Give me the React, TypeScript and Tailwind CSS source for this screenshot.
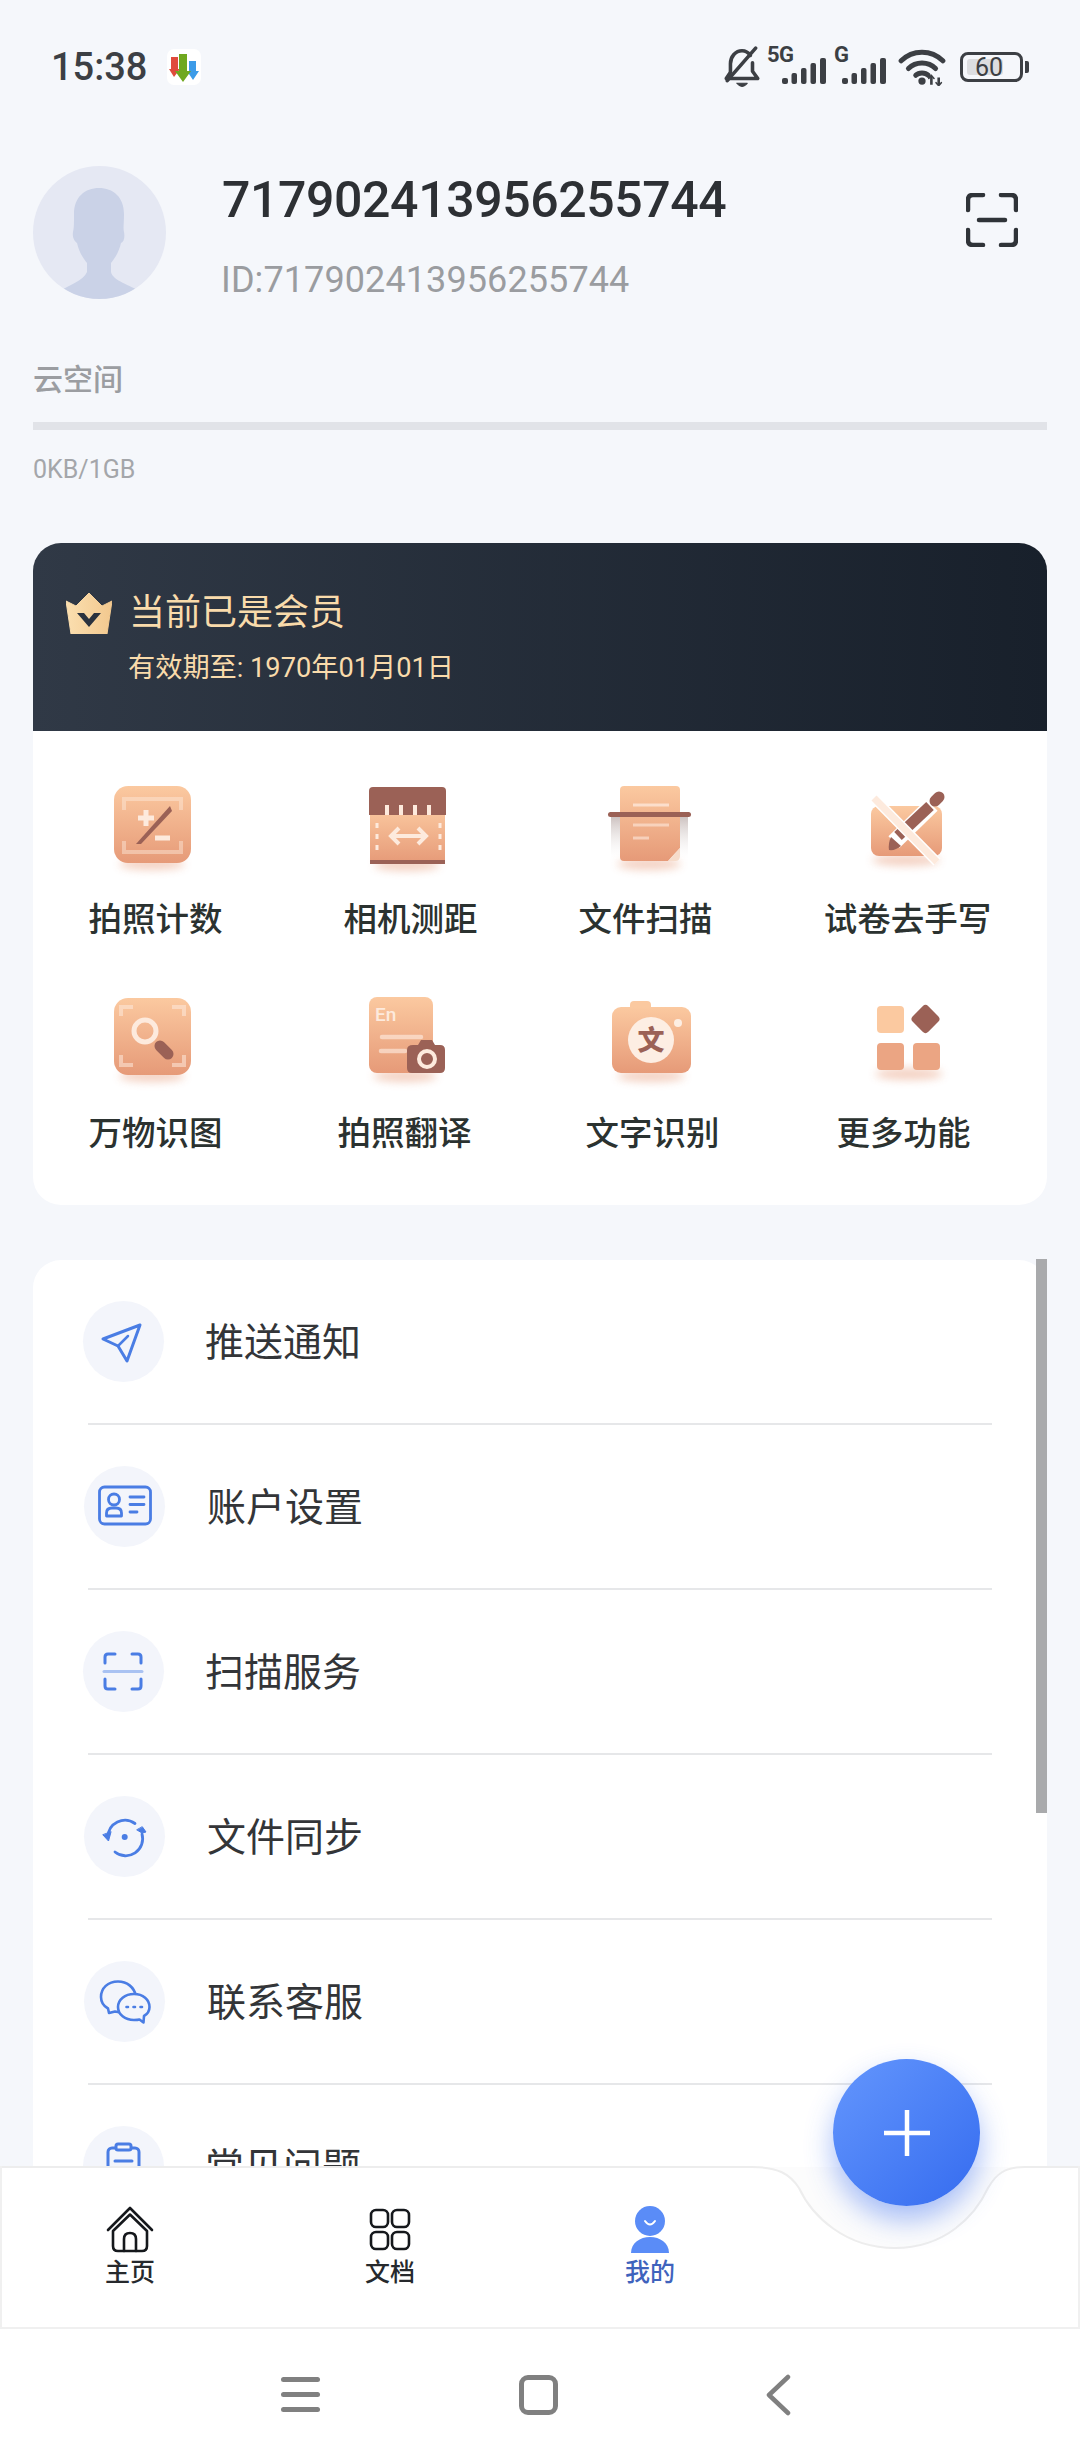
import React from 'react';

const BLUE = '#4a7de4';

// peach feature icons share this frame: 100x100 with gradient + soft floor shadow
const PeachFrame: React.FC<{ shadow: [number, number, number]; className?: string; children: React.ReactNode }> = ({ shadow, className, children }) => (
  <svg width="100" height="100" viewBox="0 0 100 100" className={className}>
    <defs>
      <linearGradient id="peach" x1="0" y1="0" x2="0" y2="1">
        <stop offset="0" stopColor="#fbc9a0" />
        <stop offset="1" stopColor="#e69a78" />
      </linearGradient>
      <filter id="soft" x="-30%" y="-100%" width="160%" height="300%">
        <feGaussianBlur stdDeviation="4" />
      </filter>
    </defs>
    <ellipse cx={shadow[0]} cy={shadow[1]} rx={shadow[2]} ry="6" fill="#e69a78" opacity="0.45" filter="url(#soft)" />
    {children}
  </svg>
);

const LIGHT = '#fdeadd';
const BROWN = '#9b6156';

const CounterIcon = () => (
  <PeachFrame shadow={[46, 84, 33]}>
    <g transform="translate(8,6)">
      <rect width="77" height="77" rx="14" fill="url(#peach)" />
      <path d="M10 24V13H67V24M10 55V66H67V55" fill="none" stroke={LIGHT} strokeOpacity="0.45" strokeWidth="4" />
      <path d="M24 32H40M32 24V40" stroke={LIGHT} strokeWidth="5" />
      <path d="M41 52H56" stroke={LIGHT} strokeWidth="5" />
      <path d="M56 20L58 25L27 58L22 58Z" fill={BROWN} />
    </g>
  </PeachFrame>
);

const RulerIcon = () => (
  <PeachFrame shadow={[46, 85, 33]}>
    <g transform="translate(8,7)">
      <rect x="1" y="20" width="75" height="56" fill="url(#peach)" />
      <path d="M4 0H73Q77 0 77 4V28H0V4Q0 0 4 0Z" fill={BROWN} />
      <path d="M18 18V28M32 18V28M46 18V28M60 18V28" stroke={LIGHT} strokeWidth="4" />
      <rect x="1" y="73" width="75" height="4" fill={BROWN} />
      <path d="M8 36V66M71 36V66" stroke={LIGHT} strokeWidth="3" strokeDasharray="5 6" />
      <path d="M22 49H57M30 41L22 49L30 57M49 41L57 49L49 57" fill="none" stroke={LIGHT} strokeWidth="4" />
    </g>
  </PeachFrame>
);

const ScanDocIcon = () => (
  <PeachFrame shadow={[53, 84, 32]}>
    <defs>
      <linearGradient id="fade" x1="0" y1="0" x2="0" y2="1">
        <stop offset="0" stopColor="#c9bdbb" />
        <stop offset="1" stopColor="#ffffff" stopOpacity="0.2" />
      </linearGradient>
    </defs>
    <g transform="translate(12,6)">
      <rect x="3" y="29" width="77" height="44" fill="url(#fade)" />
      <path d="M16 0H68Q72 0 72 4V62L60 75H16Q12 75 12 71V4Q12 0 16 0Z" fill="url(#peach)" />
      <path d="M60 75L72 62V70Q72 75 67 75Z" fill="#f6dccb" />
      <rect x="0" y="26" width="83" height="5" rx="2.5" fill={BROWN} />
      <path d="M25 19H61" stroke={LIGHT} strokeOpacity="0.75" strokeWidth="3" />
      <path d="M25 39H61M25 52H41" stroke={LIGHT} strokeOpacity="0.6" strokeWidth="3" />
    </g>
  </PeachFrame>
);

const NoPenIcon = () => (
  <PeachFrame shadow={[48, 80, 34]}>
    <rect x="13" y="26" width="71" height="50" rx="8" fill="url(#peach)" />
    <path d="M36 62L74 25" stroke="#ffffff" strokeWidth="16" />
    <path d="M40 56L72 26" stroke={BROWN} strokeWidth="11" />
    <path d="M77 21L81 17" stroke={BROWN} strokeWidth="11" strokeLinecap="round" />
    <path d="M33 57L43 66Q37 71 31 70Q30 63 33 57Z" fill={BROWN} />
    <path d="M16 18L79 82" stroke="#ffffff" strokeWidth="10" />
    <path d="M16 18L79 82" stroke={LIGHT} strokeWidth="7" />
  </PeachFrame>
);

const LensIcon = () => (
  <PeachFrame shadow={[46, 84, 33]}>
    <g transform="translate(8,6)">
      <rect width="77" height="77" rx="14" fill="url(#peach)" />
      <path d="M7 18V9H19M58 9H70V18M7 57V67H19M58 67H70V57" fill="none" stroke={LIGHT} strokeOpacity="0.55" strokeWidth="4" />
      <circle cx="31" cy="33" r="11" fill="none" stroke={LIGHT} strokeWidth="5" />
      <path d="M46 48L54 56" stroke={BROWN} strokeWidth="11" strokeLinecap="round" />
    </g>
  </PeachFrame>
);

const TranslateIcon = () => (
  <PeachFrame shadow={[50, 84, 32]}>
    <rect x="14" y="5" width="64" height="76" rx="8" fill="url(#peach)" />
    <text x="20" y="29" fontSize="19" fontWeight="500" fill={LIGHT} fontFamily="Roboto, sans-serif">En</text>
    <path d="M27 45H66M26 59H50" stroke={LIGHT} strokeOpacity="0.65" strokeWidth="4.5" strokeLinecap="round" />
    <path d="M58 53H63L66 48H77L80 53H85Q90 53 90 58V76Q90 81 85 81H57Q52 81 52 76V58Q52 53 58 53Z" fill={BROWN} />
    <circle cx="72" cy="67" r="8" fill="none" stroke={LIGHT} strokeWidth="4" />
  </PeachFrame>
);

const OcrIcon = () => (
  <PeachFrame shadow={[48, 84, 34]}>
    <rect x="27" y="9" width="21" height="14" rx="4" fill="#fbc9a0" />
    <rect x="9" y="15" width="79" height="66" rx="9" fill="url(#peach)" />
    <circle cx="48" cy="48" r="23" fill="#fdeee3" />
    <circle cx="75" cy="31" r="4" fill="#fdeee3" />
    <text x="48" y="58" textAnchor="middle" fontSize="27" fontWeight="900" fill={BROWN} fontFamily="'Noto Sans CJK SC', sans-serif">文</text>
  </PeachFrame>
);

const MoreIcon = () => (
  <PeachFrame shadow={[55, 82, 34]}>
    <rect x="23" y="14" width="27" height="27" rx="4" fill="#fbc9a0" />
    <rect x="23" y="51" width="27" height="27" rx="4" fill="#eba583" />
    <rect x="59" y="51" width="27" height="27" rx="4" fill="#eba583" />
    <rect x="60.5" y="16" width="22" height="22" rx="4" fill={BROWN} transform="rotate(45 71.5 27)" />
  </PeachFrame>
);

// rows aren't evenly spaced in the source, so each item carries its own left margin
const rowOne = [
  { label: '拍照计数', icon: <CounterIcon />, ml: 'ml-[56px]', w: 'w-[133px]' },
  { label: '相机测距', icon: <RulerIcon />, ml: 'ml-[122px]', w: 'w-[133px]' },
  { label: '文件扫描', icon: <ScanDocIcon />, ml: 'ml-[102px]', w: 'w-[133px]' },
  { label: '试卷去手写', icon: <NoPenIcon />, ml: 'ml-[113px]', w: 'w-[165px]' },
];
const rowTwo = [
  { label: '万物识图', icon: <LensIcon />, ml: 'ml-[56px]', w: 'w-[133px]' },
  { label: '拍照翻译', icon: <TranslateIcon />, ml: 'ml-[116px]', w: 'w-[133px]' },
  { label: '文字识别', icon: <OcrIcon />, ml: 'ml-[115px]', w: 'w-[133px]' },
  { label: '更多功能', icon: <MoreIcon />, ml: 'ml-[118px]', w: 'w-[133px]' },
];

const Feature: React.FC<{ label: string; icon: React.ReactNode; ml: string; w: string; labelTop?: string }> = ({ label, icon, ml, w, labelTop = 'mt-[20px]' }) => (
  <div className={`flex flex-col items-center ${ml} ${w}`}>
    {icon}
    <span className={`${labelTop} text-[33.5px] leading-[40px] font-medium text-[#2b3230] whitespace-nowrap`}>{label}</span>
  </div>
);

const SendGlyph = () => (
  <svg width="81" height="81" viewBox="0 0 81 81" fill="none" stroke={BLUE} strokeWidth="3" strokeLinejoin="round" strokeLinecap="round">
    <path d="M57 24L20 38L35 45L44 60Z" />
    <path d="M35 45L45 35" strokeWidth="2.5" />
  </svg>
);
const CardGlyph = () => (
  <svg width="81" height="81" viewBox="0 0 81 81" fill="none" stroke={BLUE} strokeWidth="2.8" strokeLinecap="round">
    <rect x="15.5" y="21" width="51" height="37" rx="5" />
    <circle cx="30" cy="33.5" r="5.5" />
    <path d="M22.5 50V47Q22.5 42 28 42H32Q37.5 42 37.5 47V50Z" strokeLinejoin="round" />
    <path d="M46 31H60M46 38.5H60M46 46H53" />
  </svg>
);
const ScanGlyph = () => (
  <svg width="81" height="81" viewBox="0 0 81 81" fill="none" stroke={BLUE} strokeWidth="3" strokeLinecap="round" strokeLinejoin="round">
    <path d="M22 32V26Q22 23 25 23H32M49 23H55Q58 23 58 26V32M22 48V55Q22 58 25 58H32M49 58H55Q58 58 58 55V48" />
    <path d="M21 40.5H59" stroke="#a9c2f2" />
  </svg>
);
const SyncGlyph = () => (
  <svg width="81" height="81" viewBox="0 0 81 81" fill="none" stroke={BLUE} strokeWidth="2.8" strokeLinecap="round">
    <path d="M24 41A17 17 0 0 1 51 27.5" />
    <path d="M58 38A17 17 0 0 1 31 56" />
    <path d="M19 39L24.5 45L27 36Z" fill={BLUE} strokeWidth="1" strokeLinejoin="round" />
    <path d="M53 34L58 37L62 36L58.5 31Z" fill={BLUE} strokeWidth="1" strokeLinejoin="round" />
    <circle cx="40.7" cy="41" r="3" fill={BLUE} stroke="none" />
  </svg>
);
const ChatGlyph = () => (
  <svg width="81" height="81" viewBox="0 0 81 81" fill="none" stroke={BLUE} strokeWidth="2.6" strokeLinejoin="round">
    <path d="M34 20.5C24 20.5 17 27 17 36C17 41 19.5 45 24 47.5L25 52L31 50.5C33 51 36 51.5 38 51C45 49 52 42 52 35C50 26 43 20.5 34 20.5Z" />
    <path d="M50 33C41 33 34 38.5 34 46C34 53.5 41 59 50 59C52 59 54 59 55.5 58.5L59.5 61.5L60 55C63.5 53 65.5 50 65.5 46C65.5 38.5 59 33 50 33Z" fill="#f3f5fb" />
    <path d="M42.5 46H44M49.5 46H51M56.5 46H58" strokeLinecap="round" />
  </svg>
);
const ClipGlyph = () => (
  <svg width="81" height="81" viewBox="0 0 81 81" fill="none" stroke={BLUE} strokeWidth="3" strokeLinecap="round" strokeLinejoin="round">
    <rect x="25" y="22" width="31" height="38" rx="4" />
    <rect x="33" y="18" width="15" height="6" rx="2" fill="#f3f5fb" />
    <path d="M32 35H49M32 43H49" />
  </svg>
);

const menu = [
  { label: '推送通知', icon: <SendGlyph />, pl: 'pl-[50px]', ml: 'ml-[41px]' },
  { label: '账户设置', icon: <CardGlyph />, pl: 'pl-[51px]', ml: 'ml-[42px]' },
  { label: '扫描服务', icon: <ScanGlyph />, pl: 'pl-[50px]', ml: 'ml-[41px]' },
  { label: '文件同步', icon: <SyncGlyph />, pl: 'pl-[51px]', ml: 'ml-[42px]' },
  { label: '联系客服', icon: <ChatGlyph />, pl: 'pl-[51px]', ml: 'ml-[42px]' },
  { label: '常见问题', icon: <ClipGlyph />, pl: 'pl-[50px]', ml: 'ml-[41px]' },
];

const Signal = () => (
  <svg width="44" height="28" viewBox="0 0 44 28" fill="#3c3f44">
    <rect x="0" y="21" width="6" height="6" rx="2" />
    <rect x="9.5" y="16" width="5.500" height="11" rx="2" />
    <rect x="19" y="11" width="5.500" height="16" rx="2" />
    <rect x="28.5" y="6" width="5.500" height="21" rx="2" />
    <rect x="38" y="1" width="6" height="26" rx="2" />
  </svg>
);

const StatusIcons = () => (
  <div className="ml-auto mr-[51px] flex items-center text-[#3c3f44]">
    <svg width="38" height="42" viewBox="0 0 36 40" fill="none" stroke="#3c3f44" strokeWidth="3.4" strokeLinecap="round" strokeLinejoin="round">
      <path d="M7 24V17C7 10 12 4.500 18 4.500C21 4.500 24 6 26 9" />
      <path d="M28 16V24L33 31H3L7 25" />
      <path d="M31 2L4 33" />
      <path d="M13 35.500H23Q20 38.500 18 38.500Q15.500 38.500 13 35.500Z" fill="#3c3f44" strokeWidth="1" />
    </svg>
    <div className="relative ml-[6px] w-[59px] h-[34px]">
      <span className="absolute left-0 top-[-6px] text-[22px] leading-[22px] font-bold tracking-[-0.5px]">5G</span>
      <div className="absolute right-0 top-[7px]"><Signal /></div>
    </div>
    <div className="relative ml-[1px] w-[59px] h-[34px]">
      <span className="absolute left-[7px] top-[-6px] text-[22px] leading-[22px] font-bold">G</span>
      <div className="absolute right-0 top-[7px]"><Signal /></div>
    </div>
    <svg width="48" height="38" viewBox="0 0 46 36" fill="none" stroke="#3c3f44" strokeWidth="4.800" strokeLinecap="round" className="ml-[12px]">
      <path d="M3 12C14 1 32 1 43 12" />
      <path d="M10 19.500C17 12.500 29 12.500 36 19.500" />
      <path d="M17 26C20 23 26 23 29 26" />
      <circle cx="23" cy="31.500" r="3.500" fill="#3c3f44" stroke="none" />
      <path d="M32 35V27M39 28V35" strokeWidth="2.500" strokeLinecap="butt" />
      <path d="M29.500 29L32 26L34.500 29M36.500 33L39 36L41.500 33" strokeWidth="1.500" />
    </svg>
    <div className="relative ml-[14px] w-[63px] h-[30px] rounded-[8px] border-[3px] border-[#3c3f44]">
      <div className="absolute left-[4px] top-[4px] bottom-[4px] w-[36px] rounded-[3px] bg-[#dcdde0]" />
      <span className="absolute inset-0 flex items-center justify-center text-[25px] leading-none pr-[5px] font-normal">60</span>
    </div>
    <div className="ml-[2px] w-[4px] h-[12px] rounded-r-[2px] bg-[#3c3f44]" />
  </div>
);

const AppBadge = () => (
  <svg width="34" height="36" viewBox="0 0 34 36" className="ml-[20px]">
    <rect width="34" height="36" rx="7" fill="#ffffff" />
    <path d="M4 8H11V20H13L7 28L2 20H4Z" fill="#e04a3c" />
    <path d="M22 12H29V22H32L26 31L20 22H22Z" fill="#3c9be8" />
    <path d="M12 5H20V22H24L16 33L8 22H12Z" fill="#6fa81f" />
  </svg>
);

const TopScan = () => (
  <svg width="52" height="54" viewBox="0 0 52 54" fill="none" stroke="#2f3338" strokeWidth="4.5" strokeLinecap="round" strokeLinejoin="round" className="mt-[27px] ml-auto mr-[62px]">
    <path d="M2 17V7Q2 2 7 2H17M35 2H45Q50 2 50 7V17M2 37V47Q2 52 7 52H17M35 52H45Q50 52 50 47V37" />
    <path d="M13 27H39" />
  </svg>
);

const Avatar = () => (
  <svg width="133" height="133" viewBox="0 0 133 133">
    <circle cx="66.500" cy="66.500" r="66.500" fill="#e5e8f3" />
    <clipPath id="av"><circle cx="66.500" cy="66.500" r="66.500" /></clipPath>
    <path
      clipPath="url(#av)"
      d="M66 22C52 22 41 31 41 48C41 58 41 62 40 66C39 72 42 76 44 77C46 86 50 92 54 97V106C50 115 36 119 25 126L25 140H108V126C97 119 80 115 78 106V97C82 92 86 86 88 77C91 76 92 71 91 66C90 62 91 58 91 48C91 31 80 22 66 22Z"
      fill="#cad2e7"
    />
  </svg>
);

const Crown = () => (
  <svg width="46" height="41" viewBox="0 0 46 41">
    <defs>
      <linearGradient id="gold" x1="0" y1="0" x2="1" y2="0">
        <stop offset="0" stopColor="#fbdfb0" />
        <stop offset="1" stopColor="#f2c88e" />
      </linearGradient>
    </defs>
    <path d="M0 8L10 13L23 0L36 13L46 8L41 41H5Z" fill="url(#gold)" stroke="url(#gold)" strokeWidth="1" strokeLinejoin="round" />
    <path d="M11 20H18L23 26L28 20H35L23 34Z" fill="#2a323e" />
  </svg>
);

const BottomNav = () => (
  <div className="absolute left-0 right-0 bottom-0 h-[294px] bg-white">
    <svg width="1080" height="90" viewBox="0 0 1080 90" className="absolute left-0 top-0">
      <path
        d="M0 1H752C778 1 790 8 799 22C812 50 845 82 895 82C945 82 975 50 988 22C996 8 1005 1 1025 1H1080"
        fill="#fcfcfc"
        stroke="#ededed"
        strokeWidth="2"
      />
    </svg>
    <div className="relative h-[163px] border-b-2 border-x-2 border-[#f0f0f0] flex pt-[40px]">
      <div className="w-[260px] flex flex-col items-center ml-[-2px]">
        <svg width="48" height="47" viewBox="0 0 48 47" fill="none" stroke="#15181c" strokeWidth="2.600" strokeLinecap="round" strokeLinejoin="round">
          <path d="M2 24L24 2L46 24" />
          <path d="M7 25L24 8.500L41 25V40Q41 45 36 45H12Q7 45 7 40Z" />
          <path d="M18 45V33Q18 27 24 27Q30 27 30 33V45" />
        </svg>
        <span className="mt-[5px] text-[25px] leading-[30px] font-medium text-[#26292d]">主页</span>
      </div>
      <div className="w-[260px] flex flex-col items-center">
        <svg width="48" height="47" viewBox="0 0 48 47" fill="none" stroke="#15181c" strokeWidth="2.600">
          <rect x="5" y="4" width="17" height="17" rx="5" />
          <rect x="26" y="4" width="17" height="17" rx="5" />
          <rect x="5" y="26" width="17" height="17" rx="5" />
          <rect x="26" y="26" width="17" height="17" rx="5" />
        </svg>
        <span className="mt-[5px] text-[25px] leading-[30px] font-medium text-[#26292d]">文档</span>
      </div>
      <div className="w-[260px] flex flex-col items-center">
        <svg width="48" height="47" viewBox="0 0 48 47">
          <circle cx="24" cy="15" r="15" fill="#5a8cf7" />
          <path d="M19 15Q24 22 29 15" fill="none" stroke="#ffffff" strokeWidth="2" strokeLinecap="round" />
          <path d="M5 47C5 37 14 31 24 31C34 31 43 37 43 47Z" fill="#5a8cf7" />
        </svg>
        <span className="mt-[5px] text-[25px] leading-[30px] font-medium text-[#3f63bd]">我的</span>
      </div>
    </div>
    {/* phone nav keys */}
    <div className="relative h-[131px] flex items-start">
      <div className="ml-[281px] mt-[48px] w-[39px] flex flex-col gap-[10px]">
        <div className="h-[5px] rounded-full bg-[#808080]" />
        <div className="h-[5px] rounded-full bg-[#808080]" />
        <div className="h-[5px] rounded-full bg-[#808080]" />
      </div>
      <div className="ml-[199px] mt-[46px] w-[39px] h-[40px] rounded-[9px] border-[5px] border-[#808080]" />
      <svg width="26" height="42" viewBox="0 0 26 42" fill="none" stroke="#808080" strokeWidth="4.500" strokeLinecap="round" strokeLinejoin="round" className="ml-[207px] mt-[45px]">
        <path d="M23 3L4 21L23 39" />
      </svg>
    </div>
  </div>
);

export default function App() {
  return (
    <div className="relative w-[1080px] h-[2460px] overflow-hidden bg-[#f5f7fb] font-['Roboto','Noto_Sans_CJK_SC',sans-serif]">
      <div className="h-[134px] flex items-center">
        <span className="ml-[51px] text-[38px] leading-none font-medium text-[#3c3f44]">15:38</span>
        <AppBadge />
        <StatusIcons />
      </div>

      <div className="mt-[32px] pl-[33px] flex items-start">
        <Avatar />
        <div className="ml-[56px]">
          <p className="mt-[4px] text-[50px] leading-[60px] font-medium tracking-[-0.4px] text-[#2d3034]">717902413956255744</p>
          <p className="mt-[28px] ml-[-1px] text-[36px] leading-[44px] tracking-[0.1px] text-[#9a9ca0]">ID:717902413956255744</p>
        </div>
        <TopScan />
      </div>

      <div className="mx-[33px]">
        <p className="mt-[58px] text-[30px] leading-[40px] font-medium text-[#9b9da1]">云空间</p>
        <div className="mt-[22px] h-[8px] bg-[#e1e3e8]" />
        <p className="mt-[25px] text-[25px] leading-[30px] text-[#a4a6aa]">0KB/1GB</p>

        <div className="mt-[58px] rounded-[28px] overflow-hidden bg-white">
          <div className="h-[188px] pt-[45px] bg-gradient-to-r from-[#303946] to-[#18202b]">
            <div className="flex items-center pl-[33px] h-[50px]">
              <Crown />
              <span className="ml-[17px] text-[36px] leading-[50px] text-[#f9dbab]">当前已是会员</span>
            </div>
            <p className="mt-[12px] pl-[95px] text-[27.2px] leading-[36px] text-[#f9dbab]">有效期至: 1970年01月01日</p>
          </div>
          <div className="h-[474px] pt-[49px]">
            <div className="flex">
              {rowOne.map((f) => <Feature key={f.label} {...f} />)}
            </div>
            <div className="flex mt-[52px]">
              {rowTwo.map((f) => <Feature key={f.label} {...f} labelTop="mt-[22px]" />)}
            </div>
          </div>
        </div>

        <div className="mt-[55px] rounded-t-[28px] bg-white">
          {menu.map((m, i) => (
            <div key={m.label}>
              <div className={`h-[163px] flex items-center ${m.pl}`}>
                <div className="w-[81px] h-[81px] rounded-full bg-[#f3f5fb]">{m.icon}</div>
                <span className={`${m.ml} pt-[2px] text-[39px] leading-[48px] text-[#333538]`}>{m.label}</span>
              </div>
              {i < menu.length - 1 && <div className="mx-[55px] h-[2px] bg-[#e6e7e9]" />}
            </div>
          ))}
        </div>
      </div>

      {/* scrollbar thumb */}
      <div className="absolute left-[1036px] top-[1259px] w-[11px] h-[554px] bg-[#a9aaac]" />

      <BottomNav />

      <div className="absolute left-[833px] top-[2059px] w-[147px] h-[147px] rounded-full bg-gradient-to-br from-[#6496fd] to-[#356bef] shadow-[0_14px_28px_rgba(60,110,240,0.45)] flex items-center justify-center">
        <svg width="46" height="46" viewBox="0 0 46 46" stroke="#ffffff" strokeWidth="4.500">
          <path d="M0 23H46M23 0V46" />
        </svg>
      </div>
    </div>
  );
}
